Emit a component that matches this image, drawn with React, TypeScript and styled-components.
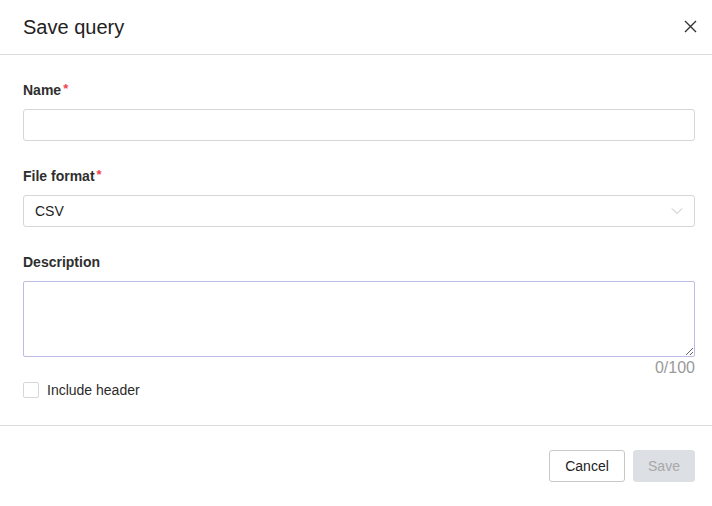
import React from "react";
import styled, { createGlobalStyle } from "styled-components";

const Global = createGlobalStyle`
  html, body { margin: 0; padding: 0; background: #fff; }
  body { font-family: "Liberation Sans", Arial, sans-serif; color: #333; }
  * { box-sizing: border-box; }
`;

const Dialog = styled.div`
  width: 712px;
  height: 506px;
  background: #fff;
  display: flex;
  flex-direction: column;
`;

const Header = styled.div`
  height: 55px;
  border-bottom: 1px solid #dcdcdc;
  display: flex;
  align-items: center;
  justify-content: space-between;
  padding: 0 15px 0 23px;
`;

const Title = styled.h2`
  margin: 0;
  font-size: 20px;
  font-weight: 400;
  color: #222;
  line-height: 24px;
  padding-bottom: 1px;
`;

const CloseButton = styled.button`
  border: none;
  background: none;
  padding: 0;
  width: 14px;
  height: 14px;
  display: flex;
  align-items: center;
  justify-content: center;
  cursor: pointer;
  margin-bottom: 1px;
`;

const Body = styled.div`
  padding: 25px 17px 27px 23px;
  display: flex;
  flex-direction: column;
`;

const Field = styled.div<{ $gap?: number }>`
  display: flex;
  flex-direction: column;
  margin-bottom: ${(p) => p.$gap ?? 25}px;
`;

const Label = styled.label`
  display: block;
  height: 20px;
  font-size: 14px;
  font-weight: 700;
  color: #2e2e2e;
  line-height: 20px;
  margin-bottom: 9px;
`;

const Required = styled.span`
  color: #f0444b;
  margin-left: 2px;
  font-size: 13px;
  line-height: 0;
  position: relative;
  top: -2px;
`;

const TextInput = styled.input`
  height: 32px;
  border: 1px solid #d6d6d6;
  border-radius: 3px;
  padding: 0 11px;
  font-family: inherit;
  font-size: 14px;
  outline: none;
`;

const SelectBox = styled.div`
  height: 32px;
  border: 1px solid #d6d6d6;
  border-radius: 3px;
  padding: 0 11px;
  display: flex;
  align-items: center;
  justify-content: space-between;
  font-size: 14px;
  color: #222;
`;

const TextArea = styled.textarea`
  height: 76px;
  border: 1px solid #bcbce6;
  border-radius: 2px;
  padding: 6px 11px;
  font-family: inherit;
  font-size: 14px;
  resize: vertical;
  outline: none;
  display: block;
`;

const Counter = styled.div`
  text-align: right;
  font-size: 16px;
  line-height: 20px;
  color: #9a9a9a;
  margin-top: 1px;
`;

const CheckRow = styled.label`
  display: flex;
  align-items: center;
  gap: 8px;
  margin-top: 4px;
  font-size: 14px;
  color: #2b2b2b;
  line-height: 16px;
`;

const Box = styled.span`
  width: 16px;
  height: 16px;
  border: 1px solid #d6d6d6;
  border-radius: 2px;
  background: #fff;
  display: inline-block;
`;

const Footer = styled.div`
  border-top: 1px solid #dcdcdc;
  padding: 24px 17px 0 23px;
  display: flex;
  justify-content: flex-end;
  gap: 8px;
`;

const Button = styled.button<{ $primary?: boolean; $w: number }>`
  height: 32px;
  width: ${(p) => p.$w}px;
  padding: 0;
  font-family: inherit;
  font-size: 14px;
  border-radius: 3px;
  border: 1px solid ${(p) => (p.$primary ? "#dcdfe3" : "#c8c8c8")};
  background: ${(p) => (p.$primary ? "#dcdfe3" : "#fff")};
  color: ${(p) => (p.$primary ? "#a8a8a8" : "#222")};
`;

export default function App() {
  return (
    <>
      <Global />
      <Dialog>
        <Header>
          <Title>Save query</Title>
          <CloseButton aria-label="Close">
            <svg width="13" height="13" viewBox="0 0 13 13">
              <path d="M1 1 L12 12 M12 1 L1 12" stroke="#333" strokeWidth="1.4" />
            </svg>
          </CloseButton>
        </Header>
        <Body>
          <Field>
            <Label>
              Name<Required>*</Required>
            </Label>
            <TextInput />
          </Field>
          <Field>
            <Label>
              File format<Required>*</Required>
            </Label>
            <SelectBox>
              <span>CSV</span>
              <svg width="12" height="8" viewBox="0 0 12 8">
                <path d="M1 1.5 L6 6.5 L11 1.5" stroke="#bdbdbd" strokeWidth="1" fill="none" />
              </svg>
            </SelectBox>
          </Field>
          <Field $gap={0}>
            <Label>Description</Label>
            <TextArea />
            <Counter>0/100</Counter>
          </Field>
          <CheckRow>
            <Box />
            Include header
          </CheckRow>
        </Body>
        <Footer>
          <Button $w={76}>Cancel</Button>
          <Button $primary $w={62}>Save</Button>
        </Footer>
      </Dialog>
    </>
  );
}
